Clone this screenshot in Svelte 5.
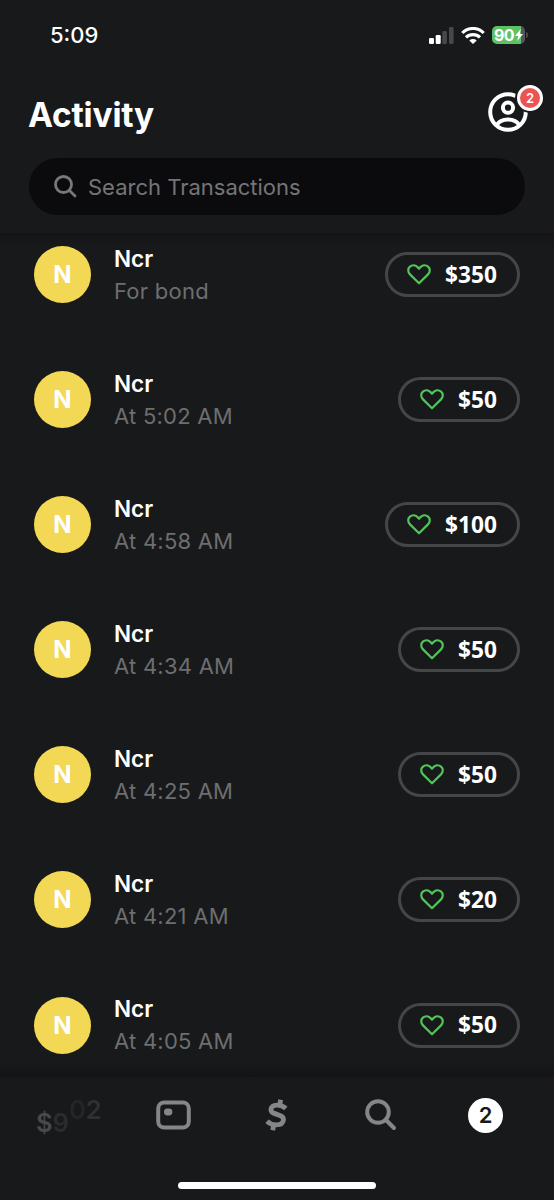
<script lang="ts">
  type Transaction = {
    name: string;
    note: string;
    amount: string;
  };

  const transactions: Transaction[] = [
    { name: 'Ncr', note: 'For bond', amount: '$350' },
    { name: 'Ncr', note: 'At 5:02 AM', amount: '$50' },
    { name: 'Ncr', note: 'At 4:58 AM', amount: '$100' },
    { name: 'Ncr', note: 'At 4:34 AM', amount: '$50' },
    { name: 'Ncr', note: 'At 4:25 AM', amount: '$50' },
    { name: 'Ncr', note: 'At 4:21 AM', amount: '$20' },
    { name: 'Ncr', note: 'At 4:05 AM', amount: '$50' }
  ];

  let search = $state('');
</script>

<div class="screen">
  <header>
    <div class="status-bar">
      <span class="clock">5:09</span>
      <div class="status-icons">
        <svg width="25" height="17" viewBox="0 0 25 17">
          <rect x="0" y="11" width="5" height="6" rx="1.3" fill="#fff" />
          <rect x="6.7" y="8" width="5" height="9" rx="1.3" fill="#fff" />
          <rect x="13.3" y="4" width="4.6" height="13" rx="1.3" fill="#47484a" />
          <rect x="20" y="0" width="4.6" height="17" rx="1.3" fill="#47484a" />
        </svg>
        <svg width="24" height="17" viewBox="0 0 24 17" fill="none" stroke="#fff" stroke-width="3.2">
          <path d="M1.3 6A15 15 0 0 1 22.7 6" />
          <path d="M5 10.4A10 10 0 0 1 19 10.4" />
          <path d="M12 17L8.3 13.5A5.4 5.4 0 0 1 15.7 13.5Z" fill="#fff" stroke="none" />
        </svg>
        <div class="battery">
          <span>90</span>
          <svg width="8" height="12" viewBox="0 0 8 12"><path d="M5.8 0L0 6.9H3.3L2.2 12L8 5H4.7Z" fill="#fff" /></svg>
        </div>
      </div>
    </div>

    <div class="title-row">
      <h1>Activity</h1>
      <button class="profile" aria-label="Profile">
        <svg width="40" height="40" viewBox="0 0 40 40" fill="none" stroke="#fff" stroke-width="4">
          <circle cx="20" cy="20" r="17.8" />
          <circle cx="20" cy="15.7" r="5.1" />
          <path d="M8.8 33C11 29 15 27.4 20 27.4S29 29 31.2 33" />
        </svg>
        <span class="badge">2</span>
      </button>
    </div>

    <label class="search">
      <svg width="23" height="23" viewBox="0 0 23 23" fill="none" stroke="#77787a" stroke-width="2.8" stroke-linecap="round">
        <circle cx="9.5" cy="9.5" r="8" />
        <path d="M15.5 15.5L21 21" />
      </svg>
      <input type="text" placeholder="Search Transactions" bind:value={search} />
    </label>
  </header>

  <main>
    {#each transactions as item}
      <div class="row">
        <div class="avatar">{item.name[0]}</div>
        <div class="details">
          <div class="name">{item.name}</div>
          <div class="note">{item.note}</div>
        </div>
        <button class="amount">
          <svg width="24" height="21" viewBox="0 0 24 21" fill="none" stroke="#51c558" stroke-width="2.2" stroke-linejoin="round">
            <path d="M12 19.3L3 10.4C0.6 8 0.7 4.5 2.9 2.6C5.4 0.5 8.8 1 10.7 3.2L12 4.7L13.3 3.2C15.2 1 18.6 0.5 21.1 2.6C23.3 4.5 23.4 8 21 10.4Z" />
          </svg>
          <span>{item.amount}</span>
        </button>
      </div>
    {/each}
  </main>

  <nav>
    <div class="tabs">
      <button class="balance" aria-label="Balance">
        <span class="dollar">$</span><span class="nine">9</span><span class="zero">0</span><span class="two">2</span>
      </button>
      <button aria-label="Card">
        <svg width="35" height="30" viewBox="0 0 35 30">
          <rect x="2.2" y="2.4" width="30.6" height="25.2" rx="6" fill="none" stroke="#858688" stroke-width="4" />
          <rect x="8" y="8.6" width="8.4" height="6.8" rx="3.4" fill="#858688" />
        </svg>
      </button>
      <button aria-label="Pay">
        <svg width="23" height="32" viewBox="0 0 23 32" fill="none" stroke="#858688" stroke-width="4.8">
          <path d="M20.8 9.4C16.4 5.2 6.6 4.6 6 10.6C5.4 16.6 19.4 14.2 18.4 21.2C17.4 27.6 7.2 27 2 22.2" />
          <path d="M14.6 6.4L15.7 0.8M8.8 25.6L7.7 31.2" />
        </svg>
      </button>
      <button class="find" aria-label="Search">
        <svg width="32" height="32" viewBox="0 0 32 32" fill="none" stroke="#858688" stroke-width="4" stroke-linecap="round">
          <circle cx="13" cy="13" r="10.8" />
          <path d="M21 21L29 29" />
        </svg>
      </button>
      <button aria-label="Activity"><span class="count">2</span></button>
    </div>
    <div class="home-indicator"></div>
  </nav>
</div>

<style>
  :global(body) {
    margin: 0;
    background: #18191b;
  }

  .screen {
    width: 554px;
    height: 1200px;
    display: flex;
    flex-direction: column;
    overflow: hidden;
    background: #18191b;
    color: #fff;
    font-family: Inter, 'Liberation Sans', sans-serif;
  }

  button {
    padding: 0;
    border: none;
    background: none;
    color: inherit;
    font: inherit;
  }

  svg {
    display: block;
    flex: none;
  }

  header {
    flex: none;
    height: 233px;
  }

  .status-bar {
    display: flex;
    justify-content: space-between;
    align-items: center;
    height: 70px;
    padding: 0 29px 0 50px;
  }

  .clock {
    font-size: 22px;
    font-weight: 500;
  }

  .status-icons {
    display: flex;
    align-items: center;
    gap: 7px;
  }

  .battery {
    position: relative;
    display: flex;
    align-items: center;
    justify-content: center;
    gap: 1px;
    width: 33px;
    height: 18px;
    border-radius: 5px;
    background: linear-gradient(90deg, #5fc262 0 29px, #55585a 29px);
    font-size: 16px;
    font-weight: 700;
    letter-spacing: -0.5px;
  }

  .battery::after {
    content: '';
    position: absolute;
    right: -3px;
    top: 6px;
    width: 2px;
    height: 6px;
    border-radius: 0 2px 2px 0;
    background: #47484a;
  }

  .title-row {
    display: flex;
    justify-content: space-between;
    align-items: flex-start;
    height: 88px;
    padding: 22px 26px 0 28px;
    box-sizing: border-box;
  }

  h1 {
    margin: 3px 0 0;
    font-size: 33.5px;
    font-weight: 650;
    letter-spacing: -0.2px;
    line-height: 40px;
  }

  .profile {
    position: relative;
    height: 40px;
  }

  .badge {
    position: absolute;
    left: 29px;
    top: -7px;
    display: grid;
    place-items: center;
    width: 20px;
    height: 20px;
    border: 3px solid #fff;
    border-radius: 50%;
    background: #ed5350;
    box-shadow: 0 0 0 2px #18191b;
    font-size: 13px;
    font-weight: 600;
  }

  .search {
    display: flex;
    align-items: center;
    gap: 11px;
    height: 57px;
    margin: 0 29px;
    padding: 0 25px;
    box-sizing: border-box;
    border-radius: 29px;
    background: #0b0b0d;
  }

  .search input {
    flex: 1;
    padding: 0;
    border: none;
    outline: none;
    background: none;
    color: #fff;
    font: 400 22px Inter, sans-serif;
  }

  .search input::placeholder {
    color: #747577;
    opacity: 1;
  }

  main {
    flex: 1;
    min-height: 0;
    overflow: hidden;
    padding-top: 13px;
    box-sizing: border-box;
    background: linear-gradient(#141416, #18191b 15px, #18191b calc(100% - 15px), #141416);
  }

  .row {
    display: flex;
    align-items: center;
    height: 57px;
    margin-bottom: 68.1px;
    padding: 0 34px;
  }

  .avatar {
    display: grid;
    place-items: center;
    width: 57px;
    height: 57px;
    border-radius: 50%;
    background: #f2d855;
    font-size: 24px;
    font-weight: 700;
  }

  .details {
    flex: 1;
    margin-left: 23px;
  }

  .name {
    font-size: 22.5px;
    font-weight: 600;
    line-height: 33px;
  }

  .note {
    color: #6d6e70;
    font-size: 22px;
    letter-spacing: 0.25px;
    line-height: 33px;
  }

  .amount {
    display: flex;
    align-items: center;
    gap: 14px;
    height: 45px;
    padding: 0 20px 0 19px;
    box-sizing: border-box;
    border: 3px solid #454648;
    border-radius: 23px;
    font-family: 'Open Sans', 'Noto Sans', sans-serif;
    font-size: 22.7px;
    font-weight: 700;
    line-height: 30px;
  }

  nav {
    flex: none;
    height: 123px;
  }

  .tabs {
    display: flex;
    justify-content: space-between;
    align-items: center;
    height: 76px;
    padding: 0 51px 0 36px;
  }

  .balance {
    display: flex;
    width: 46px;
    font-size: 25.5px;
    font-weight: 600;
    line-height: 30px;
  }

  .dollar {
    color: #48494b;
    transform: translateY(8px);
  }

  .nine {
    color: #2b2c2e;
    transform: translateY(8px);
  }

  .zero {
    color: #242527;
    transform: translateY(-5px);
  }

  .two {
    color: #2f3032;
    transform: translateY(-5px);
  }

  .find {
    margin: 0 -3px 0 3px;
  }

  .count {
    display: grid;
    place-items: center;
    width: 35px;
    height: 35px;
    border-radius: 50%;
    background: #fff;
    color: #18191b;
    font-size: 22px;
    font-weight: 600;
  }

  .home-indicator {
    width: 198px;
    height: 7px;
    margin: 29px auto 0;
    border-radius: 4px;
    background: #fff;
  }
</style>
